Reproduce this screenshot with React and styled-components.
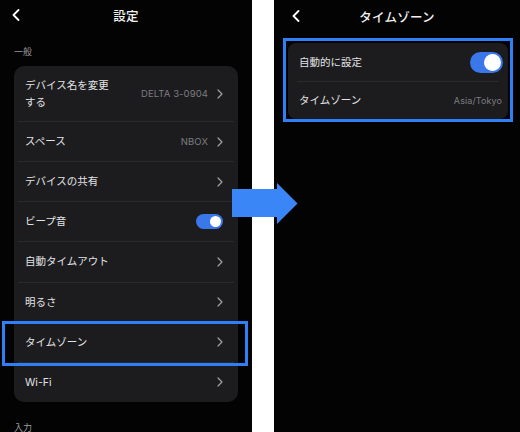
import React from 'react';
import styled, { createGlobalStyle } from 'styled-components';

const GlobalStyle = createGlobalStyle`
	html, body {
		margin: 0;
		padding: 0;
		background: #ffffff;
	}

	body {
		font-family: Inter, 'Noto Sans CJK JP', 'Noto Sans', sans-serif;
		-webkit-font-smoothing: antialiased;
	}
`;

const Frame = styled.div`
	position: relative;
	width: 520px;
	height: 432px;
	display: flex;
	gap: 22px;
	background: #ffffff;
	overflow: hidden;
`;

const Screen = styled.section`
	width: ${(p) => p.$width}px;
	height: 100%;
	background: #030303;
	color: #e4e4e6;
	display: flex;
	flex-direction: column;
	overflow: hidden;
`;

const Header = styled.header`
	height: ${(p) => p.$height}px;
	flex-shrink: 0;
	display: grid;
	grid-template-columns: 40px 1fr 40px;
	align-items: center;
`;

const BackButton = styled.button`
	background: none;
	border: none;
	padding: 0 0 0 ${(p) => p.$inset}px;
	display: flex;
	align-items: center;
	color: #ffffff;
	cursor: pointer;
`;

const Title = styled.h1`
	margin: 0;
	text-align: center;
	font-size: 12.5px;
	font-weight: 500;
	color: #f2f2f2;
	letter-spacing: 0.2px;
`;

const SectionLabel = styled.div`
	padding: 16px 14px 8px;
	font-size: 9px;
	line-height: 12px;
	color: #9b9b9f;
`;

const Card = styled.div`
	margin: ${(p) => p.$margin};
	background: #1c1c1e;
	border-radius: ${(p) => p.$radius}px;
	flex-shrink: 0;
`;

const Row = styled.div`
	position: relative;
	display: flex;
	align-items: center;
	gap: 9px;
	min-height: ${(p) => p.$minHeight}px;
	padding: ${(p) => p.$padding};
	box-sizing: border-box;

	${(p) =>
		p.$highlighted &&
		`
		&::after {
			content: '';
			position: absolute;
			left: -12px;
			right: -10px;
			top: -2px;
			bottom: -4px;
			border: 3px solid #2f80f8;
			pointer-events: none;
		}
	`}
`;

const Label = styled.span`
	flex: 1;
	min-width: 0;
	font-size: 10.5px;
	line-height: 17px;
	color: #e2e2e4;
`;

const Value = styled.span`
	flex-shrink: 0;
	margin-left: 14px;
	font-size: ${(p) => p.$size}px;
	color: #7c7c81;
	letter-spacing: 0.1px;
`;

const Divider = styled.div`
	height: 1px;
	margin: 0 ${(p) => p.$inset}px;
	background: #2a2a2d;
`;

const Switch = styled.span`
	flex-shrink: 0;
	position: relative;
	width: ${(p) => p.$w}px;
	height: ${(p) => p.$h}px;
	border-radius: ${(p) => p.$h}px;
	background: #3977ea;

	&::after {
		content: '';
		position: absolute;
		right: 2px;
		top: 2px;
		width: ${(p) => p.$h - 4}px;
		height: ${(p) => p.$h - 4}px;
		border-radius: 50%;
		background: #ffffff;
	}
`;

const Highlight = styled.div`
	margin: 6px 7px 0 9px;
	border: 3px solid #2f80f8;
	padding: 2px 2px 0;
`;

const ArrowMark = styled.svg`
	position: absolute;
	left: 232px;
	top: 183px;
`;

const Chevron = () => (
	<svg width="6" height="10" viewBox="0 0 6 10">
		<polyline
			points="1,1 5,5 1,9"
			fill="none"
			stroke="#a0a0a4"
			strokeWidth="1.2"
			strokeLinecap="round"
			strokeLinejoin="round"
		/>
	</svg>
);

const BackChevron = () => (
	<svg width="8" height="12" viewBox="0 0 8 12">
		<polyline
			points="6.5,1 1.5,6 6.5,11"
			fill="none"
			stroke="#ffffff"
			strokeWidth="1.8"
			strokeLinecap="round"
			strokeLinejoin="round"
		/>
	</svg>
);

const settings = [
	{ label: 'デバイス名を変更する', value: 'DELTA 3-0904' },
	{ label: 'スペース', value: 'NBOX' },
	{ label: 'デバイスの共有' },
	{ label: 'ビープ音', toggle: true },
	{ label: '自動タイムアウト' },
	{ label: '明るさ' },
	{ label: 'タイムゾーン', highlighted: true },
	{ label: 'Wi-Fi' },
];

const App = () => (
	<>
		<GlobalStyle />
		<Frame>
			<Screen $width={252}>
				<Header $height={30}>
					<BackButton $inset={12}>
						<BackChevron />
					</BackButton>
					<Title>設定</Title>
				</Header>
				<SectionLabel>一般</SectionLabel>
				<Card $radius={10} $margin="0 14px 4px">
					{settings.map((item, i) => (
						<React.Fragment key={item.label}>
							{i > 0 && <Divider $inset={4} />}
							<Row
								$minHeight={39.15}
								$padding="10.5px 15px 10.5px 11px"
								$highlighted={item.highlighted}
							>
								<Label>{item.label}</Label>
								{item.value && <Value $size={9.5}>{item.value}</Value>}
								{item.toggle ? <Switch $w={27} $h={15} /> : <Chevron />}
							</Row>
						</React.Fragment>
					))}
				</Card>
				<SectionLabel>入力</SectionLabel>
			</Screen>

			<Screen $width={246}>
				<Header $height={32}>
					<BackButton $inset={18}>
						<BackChevron />
					</BackButton>
					<Title>タイムゾーン</Title>
				</Header>
				<Highlight>
					<Card $radius={8} $margin="0">
						<Row $minHeight={38} $padding="0 5px 0 11px">
							<Label>自動的に設定</Label>
							<Switch $w={33} $h={21} />
						</Row>
						<Divider $inset={9} />
						<Row $minHeight={37} $padding="0 6px 0 11px">
							<Label>タイムゾーン</Label>
							<Value $size={9}>Asia/Tokyo</Value>
						</Row>
					</Card>
				</Highlight>
			</Screen>

			<ArrowMark width="66" height="42" viewBox="0 0 66 42">
				<polygon points="0,6 45,6 45,0 65.5,20.5 45,41 45,34 0,34" fill="#3a86f6" />
			</ArrowMark>
		</Frame>
	</>
);

export default App;
